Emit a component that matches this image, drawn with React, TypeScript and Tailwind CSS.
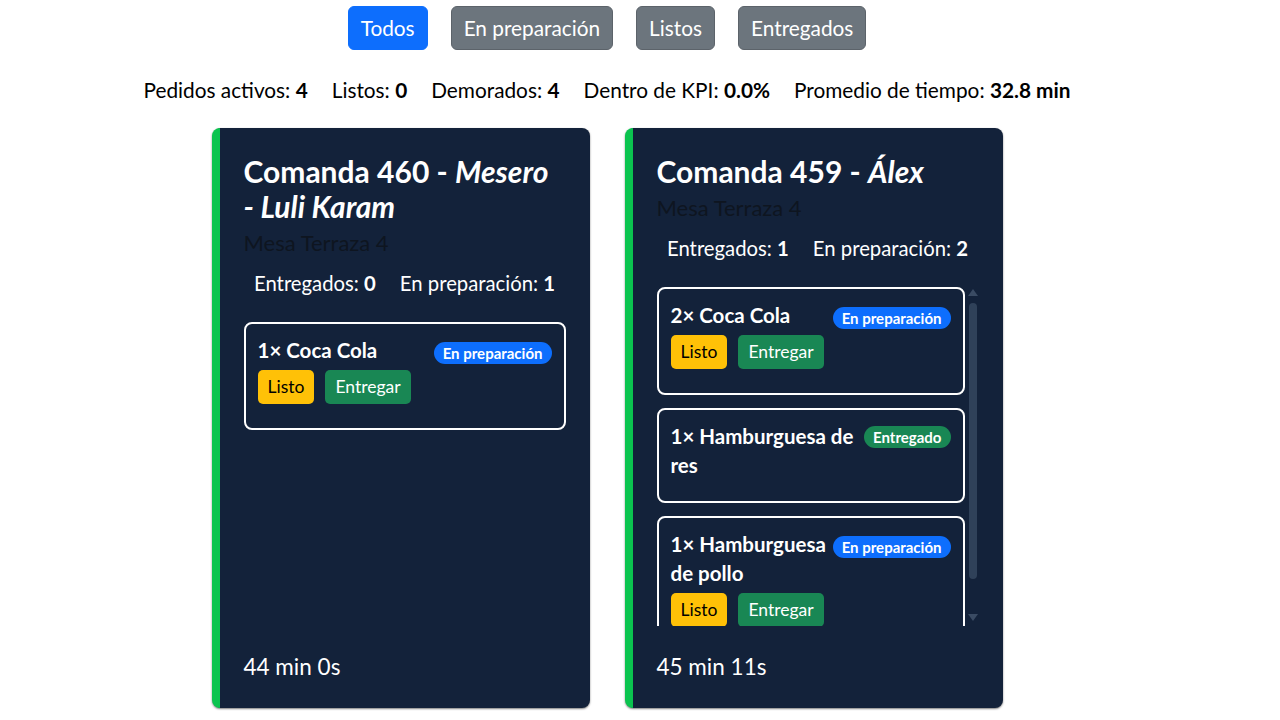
import React from "react";

type Item = {
  qty: number;
  name: string;
  status: "prep" | "done";
};

type Order = {
  id: number;
  waiter: React.ReactNode;
  table: string;
  delivered: number;
  preparing: number;
  time: string;
  scroll: boolean;
  items: Item[];
};

const orders: Order[] = [
  {
    id: 460,
    waiter: (
      <>
        Mesero <span className="whitespace-nowrap">- Luli</span> Karam
      </>
    ),
    table: "Mesa Terraza 4",
    delivered: 0,
    preparing: 1,
    time: "44 min 0s",
    scroll: false,
    items: [{ qty: 1, name: "Coca Cola", status: "prep" }],
  },
  {
    id: 459,
    waiter: "Álex",
    table: "Mesa Terraza 4",
    delivered: 1,
    preparing: 2,
    time: "45 min 11s",
    scroll: true,
    items: [
      { qty: 2, name: "Coca Cola", status: "prep" },
      { qty: 1, name: "Hamburguesa de res", status: "done" },
      { qty: 1, name: "Hamburguesa de pollo", status: "prep" },
    ],
  },
];

const filters = ["Todos", "En preparación", "Listos", "Entregados"];

function ItemBox({ item }: { item: Item }) {
  return (
    <div className="border-2 border-white rounded-lg px-3 pt-3 pb-4 shrink-0">
      <div className="text-[20.5px] leading-[29px] font-bold text-white mb-[5px]">
        {item.status === "prep" ? (
          <span className="float-right mt-[6px] ml-1 rounded-full bg-[#0d6efd] px-[9px] text-[15px] leading-[22px] font-bold text-white">
            En preparación
          </span>
        ) : (
          <span className="float-right mt-[4px] ml-1 rounded-full bg-[#198754] px-[9px] text-[15px] leading-[22px] font-bold text-white">
            Entregado
          </span>
        )}
        {item.qty}× {item.name}
      </div>
      {item.status === "prep" && (
        <div className="flex gap-[11px] mb-2">
          <button className="h-[34px] px-[10px] rounded-[5px] bg-[#ffc107] text-black text-[17.5px]">
            Listo
          </button>
          <button className="h-[34px] px-[10px] rounded-[5px] bg-[#198754] text-white text-[17.5px]">
            Entregar
          </button>
        </div>
      )}
    </div>
  );
}

function FakeScrollbar() {
  return (
    <div className="w-[12px] shrink-0 flex flex-col items-center pt-[2px] pb-[5px]">
      <div className="w-0 h-0 border-x-[5px] border-x-transparent border-b-[7px] border-b-[#3a4b63]" />
      <div className="mt-[7px] w-[8px] h-[276px] rounded-full bg-[#2f4159]" />
      <div className="flex-1" />
      <div className="w-0 h-0 border-x-[5px] border-x-transparent border-t-[7px] border-t-[#3a4b63]" />
    </div>
  );
}

function OrderCard({ order }: { order: Order }) {
  return (
    <div className="w-[378px] h-[580px] flex flex-col bg-[#13223a] rounded-lg border-l-8 border-[#0bc44f] pl-6 pr-6 pt-[26px] pb-[26px] shadow-[0_1px_2px_rgba(0,0,0,0.5)]">
      <h2 className="text-[30px] leading-[35px] font-bold text-white">
        Comanda {order.id} - <em>{order.waiter}</em>
      </h2>
      <div className="mt-[5px] text-[22px] leading-[27px] text-[#0e1520]">{order.table}</div>
      <div className="mt-3 mb-6 flex justify-center gap-6 text-[20.3px] leading-[30px] text-white">
        <span>
          Entregados: <b>{order.delivered}</b>
        </span>
        <span>
          En preparación: <b>{order.preparing}</b>
        </span>
      </div>
      <div className="flex-1 min-h-0 flex gap-[2px]">
        <div className="flex-1 min-w-0 overflow-hidden flex flex-col gap-[13px]">
          {order.items.map((it, i) => (
            <ItemBox key={i} item={it} />
          ))}
        </div>
        {order.scroll && <FakeScrollbar />}
      </div>
      <div className="mt-[26px] text-[22.5px] leading-[30px] text-white">{order.time}</div>
    </div>
  );
}

export default function App() {
  return (
    <div className="w-[1214px] min-h-screen bg-white font-['Lato','Noto_Sans',sans-serif] text-[#212529] flex flex-col items-center pt-[6px]">
      <div className="flex gap-[23px]">
        {filters.map((f, i) => (
          <button
            key={f}
            className={
              i === 0
                ? "h-[44px] px-[12px] rounded-[6px] bg-[#0d6efd] border border-[#0d6efd] text-white text-[20.8px]"
                : "h-[44px] px-[12px] rounded-[6px] bg-[#6c757d] border border-[#5c636a] text-white text-[20.8px]"
            }
          >
            {f}
          </button>
        ))}
      </div>
      <div className="mt-[26px] flex gap-6 text-[20.8px] leading-[28px] text-black">
        <span>
          Pedidos activos: <b>4</b>
        </span>
        <span>
          Listos: <b>0</b>
        </span>
        <span>
          Demorados: <b>4</b>
        </span>
        <span>
          Dentro de KPI: <b>0.0%</b>
        </span>
        <span>
          Promedio de tiempo: <b>32.8 min</b>
        </span>
      </div>
      <div className="mt-[24px] flex gap-[35px]">
        {orders.map((o) => (
          <OrderCard key={o.id} order={o} />
        ))}
      </div>
    </div>
  );
}
